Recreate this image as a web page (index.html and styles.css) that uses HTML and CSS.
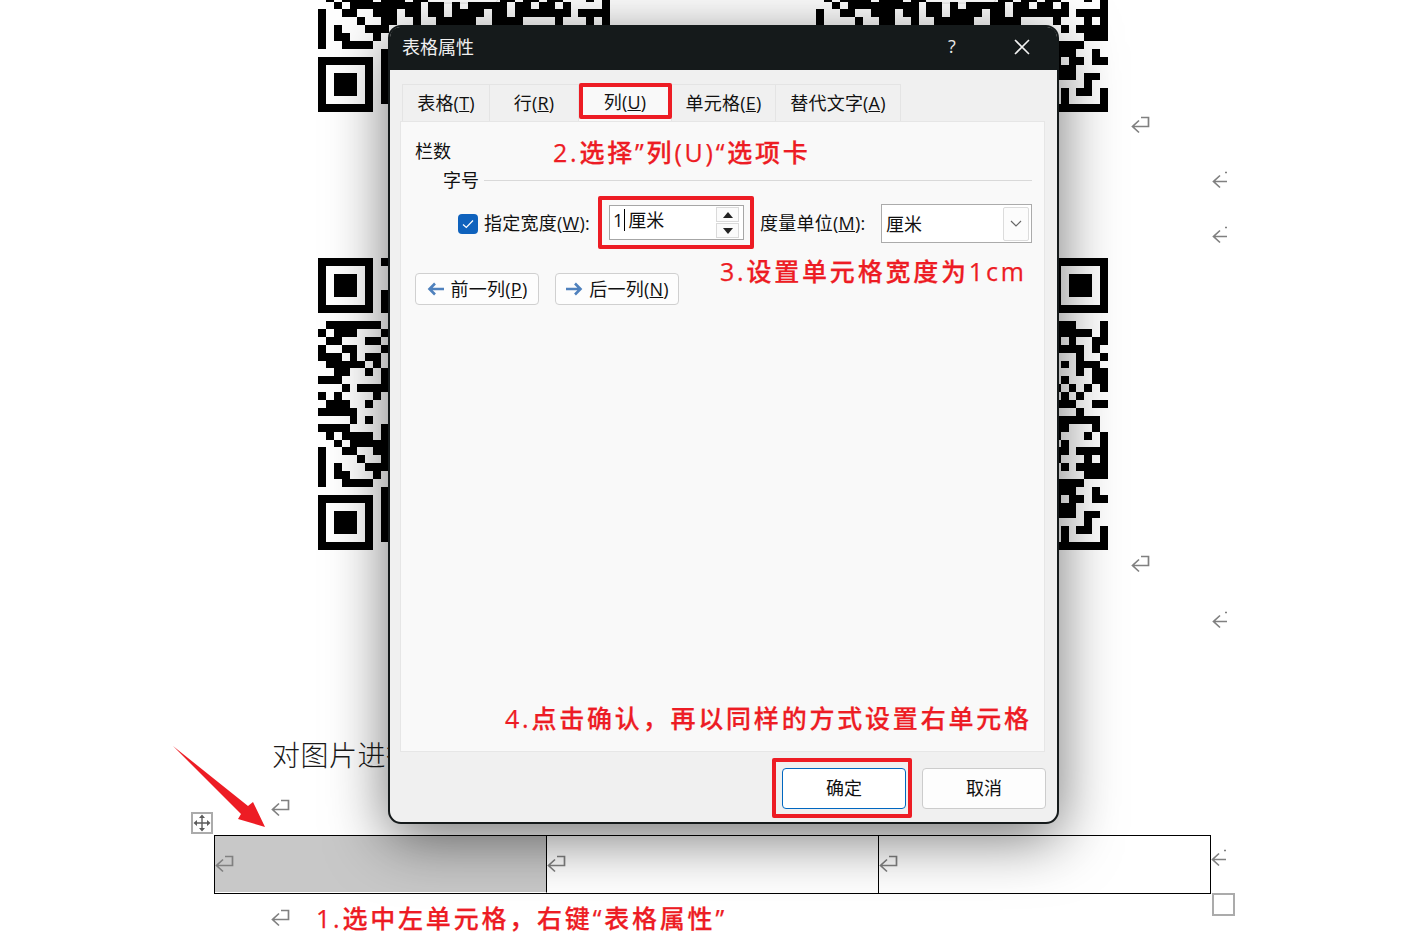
FILE: index.html
```html
<!DOCTYPE html>
<html lang="zh-CN">
<head>
    <meta charset="UTF-8">
    <meta name="viewport" content="width=device-width, initial-scale=1">
    <title>表格属性</title>
    <link rel="stylesheet" href="styles.css">
</head>
<body>

<svg class="defs" width="0" height="0" aria-hidden="true">
    <symbol id="ret" viewBox="0 0 19 18">
        <path d="M10 1.5H17.5V10.5H1.5M8 4.5L1.5 10.5L8 16.5" fill="none" stroke="#808080" stroke-width="1.7"/>
    </symbol>
    <symbol id="ret-cut" viewBox="0 0 16 18">
        <path d="M15 10.5H1.5M8 4.5L1.5 10.5L8 16.5M13 1.5H15" fill="none" stroke="#808080" stroke-width="1.7"/>
    </symbol>
    <symbol id="qr" viewBox="0 0 37 37">
        <rect x="13.8" y="14" width="9" height="9.2" rx=".6" fill="#fff" stroke="#ddd" stroke-width=".12"/>
        <path fill="#000" fill-rule="evenodd" shape-rendering="crispEdges" d="M0 0h7v7h-7zM1 1v5h5v-5zM2 2h3v3h-3z
        M0 30h7v7h-7zM1 31v5h5v-5zM2 32h3v3h-3z
        M30 0h7v7h-7zM31 1v5h5v-5zM32 2h3v3h-3z
        M8 0h1v1h-1zM8 4h1v3h-1z
        M1 8h7v1h-7zM0 9h1v1h-1zM2 9h3v1h-3zM8 9h1v1h-1z
        M1 10h2v1h-2zM6 10h2v1h-2z
        M0 11h1v1h-1zM3 11h2v1h-2zM8 11h1v1h-1z
        M0 12h3v1h-3zM4 12h1v1h-1zM6 12h2v1h-2z
        M1 13h5v1h-5zM7 13h1v1h-1z
        M2 14h2v1h-2zM6 14h1v1h-1zM8 14h1v1h-1z
        M0 15h3v1h-3zM8 15h1v1h-1z
        M3 16h1v1h-1zM5 16h4v1h-4z
        M0 17h1v1h-1zM2 17h1v1h-1zM7 17h1v1h-1z
        M1 18h3v1h-3zM6 18h1v1h-1z
        M0 19h5v1h-5z
        M4 20h1v1h-1zM6 20h1v1h-1z
        M0 21h4v1h-4zM8 21h1v1h-1z
        M1 22h1v1h-1zM3 22h4v1h-4zM8 22h1v1h-1zM9 22h2v1h-2zM12 22h2v1h-2zM23 22h2v1h-2zM26 22h2v1h-2zM29 22h2v1h-2z
        M2 23h1v1h-1zM4 23h3v1h-3zM7 23h6v1h-6zM14 23h2v1h-2zM17 23h1v1h-1zM19 23h5v1h-5zM25 23h2v1h-2zM28 23h3v1h-3z
        M0 24h1v1h-1zM3 24h2v1h-2zM7 24h3v1h-3zM11 24h2v1h-2zM14 24h2v1h-2zM17 24h4v1h-4zM22 24h2v1h-2zM25 24h5v1h-5z
        M0 25h1v1h-1zM5 25h1v1h-1zM8 25h2v1h-2zM12 25h1v1h-1zM15 25h5v1h-5zM22 25h4v1h-4zM30 25h1v1h-1z
        M0 26h1v1h-1zM2 26h1v1h-1zM6 26h3v1h-3z
        M0 27h1v1h-1zM2 27h2v1h-2zM7 27h1v1h-1z
        M0 28h1v1h-1zM3 28h4v1h-4z
        M8 29h1v7h-1z
        M30 8h3v1h-3zM36 8h1v2h-1z
        M30 9h5v1h-5z
        M30 10h1v1h-1zM32 10h1v1h-1zM35 10h2v1h-2z
        M30 11h4v1h-4zM35 11h1v1h-1z
        M33 12h1v1h-1zM36 12h1v1h-1z
        M31 13h1v1h-1zM33 13h3v1h-3z
        M33 14h1v1h-1zM35 14h2v1h-2z
        M31 15h1v1h-1zM35 15h2v1h-2z
        M30 16h1v1h-1zM32 16h1v1h-1zM34 16h1v1h-1zM36 16h1v1h-1z
        M31 17h1v1h-1zM33 17h1v1h-1z
        M30 18h3v1h-3zM35 18h2v1h-2z
        M33 19h1v1h-1z
        M30 20h6v1h-6z
        M30 21h2v1h-2zM35 21h1v1h-1z
        M34 22h1v1h-1zM36 22h1v1h-1z
        M30 23h2v1h-2zM36 23h1v1h-1z
        M30 24h2v1h-2zM33 24h4v1h-4z
        M34 25h1v1h-1zM36 25h1v1h-1z
        M31 26h1v1h-1zM33 26h4v1h-4z
        M34 27h3v1h-3z
        M30 28h4v1h-4z
        M30 29h3v1h-3zM35 29h1v1h-1z
        M30 30h1v1h-1zM32 30h2v1h-2zM35 30h2v1h-2z
        M30 31h3v1h-3z
        M30 32h3v1h-3zM34 32h2v1h-2z
        M34 33h1v1h-1z
        M31 34h1v1h-1zM33 34h2v1h-2zM36 34h1v1h-1z
        M31 35h1v1h-1zM36 35h1v1h-1z
        M30 36h7v1h-7z"/>
    </symbol>
</svg>

<main class="doc">
    <svg class="art" width="1424" height="640" viewBox="0 0 1424 640">
        <use href="#qr" x="318" y="-180" width="292" height="292"/>
        <use href="#qr" x="816" y="-180" width="292" height="292"/>
        <use href="#qr" x="318" y="258" width="292" height="292"/>
        <use href="#qr" x="816" y="258" width="292" height="292"/>
        <use href="#ret" x="1131" y="116" width="19" height="18"/>
        <use href="#ret" x="1131" y="555" width="19" height="18"/>
        <use href="#ret-cut" x="1212" y="171" width="16" height="18"/>
        <use href="#ret-cut" x="1212" y="226" width="16" height="18"/>
        <use href="#ret-cut" x="1212" y="611" width="16" height="18"/>
    </svg>

    <p class="para">对图片进行</p>

    <div class="mark-row">
        <svg width="19" height="18"><use href="#ret"/></svg>
    </div>

    <div class="table-wrap">
        <div class="move-handle">
            <svg width="18" height="18" viewBox="0 0 18 18">
                <path d="M9 2V16M2 9H16" stroke="#5c5c5c" stroke-width="1.4"/>
                <path d="M9 0.5L12 4H6zM9 17.5L12 14H6zM0.5 9L4 6V12zM17.5 9L14 6V12z" fill="#5c5c5c"/>
            </svg>
        </div>
        <div class="cell selected">
            <svg width="19" height="18"><use href="#ret"/></svg>
        </div>
        <div class="cell">
            <svg width="19" height="18"><use href="#ret"/></svg>
        </div>
        <div class="cell">
            <svg width="19" height="18"><use href="#ret"/></svg>
        </div>
        <svg class="row-end" width="16" height="18"><use href="#ret-cut"/></svg>
        <div class="resize-handle"></div>
    </div>

    <div class="caption-row">
        <svg width="19" height="18"><use href="#ret"/></svg>
        <span class="note">1.选中左单元格，右键“表格属性”</span>
    </div>

    <svg class="red-arrow" width="100" height="90" viewBox="0 0 100 90">
        <path d="M0 0L75 60L80 56L92 81L65 73L68 68z" fill="#ed1c24"/>
    </svg>
</main>

<section class="dialog">
    <header class="titlebar">
        <span class="title">表格属性</span>
        <span class="help">?</span>
        <svg class="close" width="22" height="22" viewBox="0 0 22 22">
            <path d="M4 4L18 18M18 4L4 18" stroke="#f2f2f2" stroke-width="1.6"/>
        </svg>
    </header>

    <div class="dialog-body">
        <nav class="tabs">
            <span class="tab tab-table"><span>表格(<u>T</u>)</span></span>
            <span class="tab tab-row"><span>行(<u>R</u>)</span></span>
            <span class="tab tab-col active"><span>列(<u>U</u>)</span></span>
            <span class="tab tab-cell"><span>单元格(<u>E</u>)</span></span>
            <span class="tab tab-alt"><span>替代文字(<u>A</u>)</span></span>
        </nav>

        <div class="panel">
            <div class="heading">栏数</div>
            <div class="group">
                <span>字号</span>
                <i class="rule"></i>
            </div>

            <div class="field-row">
                <span class="check">
                    <svg width="12" height="10" viewBox="0 0 12 10">
                        <path d="M1 5.5L4.3 8.5L11 1.5" fill="none" stroke="#fff" stroke-width="1.2"/>
                    </svg>
                </span>
                <label class="lbl-width">指定宽度(<u>W</u>):</label>
                <div class="spin-input">
                    <span class="spin-text">1<i class="caret"></i>厘米</span>
                    <span class="spin-btns">
                        <b><i class="tri up"></i></b>
                        <b><i class="tri down"></i></b>
                    </span>
                </div>
                <label class="lbl-unit">度量单位(<u>M</u>):</label>
                <div class="select">
                    <span class="select-text">厘米</span>
                    <span class="drop">
                        <svg width="12" height="7" viewBox="0 0 12 7">
                            <path d="M1 1L6 6L11 1" fill="none" stroke="#666" stroke-width="1.2"/>
                        </svg>
                    </span>
                </div>
            </div>

            <div class="nav-row">
                <button class="nav-btn">
                    <svg width="18" height="14" viewBox="0 0 18 14">
                        <path d="M17 7H3M8 1.5L2.5 7L8 12.5" fill="none" stroke="#4f81bd" stroke-width="2.6"/>
                    </svg>
                    <span>前一列(<u>P</u>)</span>
                </button>
                <button class="nav-btn">
                    <svg width="18" height="14" viewBox="0 0 18 14">
                        <path d="M1 7H15M10 1.5L15.5 7L10 12.5" fill="none" stroke="#4f81bd" stroke-width="2.6"/>
                    </svg>
                    <span>后一列(<u>N</u>)</span>
                </button>
            </div>
        </div>

        <footer class="dialog-foot">
            <button class="foot-btn primary">确定</button>
            <button class="foot-btn">取消</button>
        </footer>
    </div>

    <!-- red annotations lying over the dialog -->
    <span class="note note-2">2.选择”列(U)“选项卡</span>
    <span class="note note-3">3.设置单元格宽度为1cm</span>
    <span class="note note-4">4.点击确认，再以同样的方式设置右单元格</span>
    <i class="red-box box-tab"></i>
    <i class="red-box box-input"></i>
    <i class="red-box box-ok"></i>
</section>

</body>
</html>
```
FILE: styles.css
```css
* {
    box-sizing: border-box;
}

html, body {
    margin: 0;
    height: 936px;
    overflow: hidden;
    background: #fff;
}

body {
    position: relative;
    font-family: "Open Sans", "Noto Sans CJK SC", sans-serif;
    font-size: 18px;
    color: #111;
}

.defs {
    position: absolute;
}

.doc {
    display: flex;
    flex-direction: column;
    height: 936px;
}

.art {
    display: block;
    flex: none;
}

.para {
    margin: 94px 0 0 272px;
    height: 40px;
    font-family: "Noto Sans CJK SC", sans-serif;
    font-size: 28px;
    line-height: 40px;
    letter-spacing: 0.5px;
    font-weight: 300;
    color: #1a1a1a;
}

.mark-row {
    margin: 25px 0 0 271px;
    height: 18px;
}

.mark-row svg, .caption-row svg, .cell svg {
    display: block;
}

.table-wrap {
    position: relative;
    display: flex;
    width: 997px;
    height: 59px;
    margin: 18px 0 0 214px;
    border: 1.5px solid #000;
}

.cell {
    width: 332px;
    padding: 19px 0 0 0;
    border-right: 1.5px solid #000;
}

.cell:nth-child(4) {
    border-right: 0;
    flex: 1;
}

.cell.selected {
    background: #c8c8c8;
    border-bottom: 1px solid #fff;
}

.move-handle {
    position: absolute;
    left: -24.5px;
    top: -24.5px;
    width: 22px;
    height: 22px;
    display: flex;
    align-items: center;
    justify-content: center;
    background: #fff;
    border: 2px solid #ababab;
}

.row-end {
    position: absolute;
    left: 996px;
    top: 13px;
}

.resize-handle {
    position: absolute;
    left: 997px;
    top: 57px;
    width: 23px;
    height: 23px;
    border: 2px solid #ababab;
}

.caption-row {
    display: flex;
    align-items: center;
    gap: 26px;
    margin: 8px 0 0 271px;
    height: 32px;
}

.red-arrow {
    position: absolute;
    left: 173px;
    top: 746px;
}

.note {
    font-size: 25px;
    font-weight: 500;
    line-height: 32px;
    letter-spacing: 2.8px;
    color: #ed1c24;
    white-space: nowrap;
    -webkit-text-stroke: 0.25px #ed1c24;
}

/* dialog */

.dialog {
    position: absolute;
    left: 388px;
    top: 25px;
    width: 671px;
    height: 799px;
    display: flex;
    flex-direction: column;
    border: 2px solid #151a1b;
    border-radius: 13px;
    background: #f0f0f0;
    box-shadow: 0 14px 60px rgba(0, 0, 0, 0.55);
}

.titlebar {
    flex: none;
    display: flex;
    align-items: center;
    height: 43px;
    padding: 0 24px 3px 12px;
    background: #151a1b;
    border-radius: 10px 10px 0 0;
    color: #f0f0f0;
}

.title {
    flex: 1;
    margin-bottom: 3px;
}

.help {
    width: 20px;
    margin: 0 49px 3px 0;
    text-align: center;
    color: #e8e8e8;
}

.dialog-body {
    flex: 1;
    display: flex;
    flex-direction: column;
    padding: 14px 11px 0 10px;
    border-radius: 0 0 10px 10px;
}

.tabs {
    flex: none;
    display: flex;
    height: 37px;
    padding-left: 2px;
    letter-spacing: 0.2px;
}

.tab {
    display: flex;
    align-items: center;
    justify-content: center;
    padding-bottom: 2px;
    border-top: 1px solid #e4e4e4;
    border-right: 1px solid #e4e4e4;
    white-space: nowrap;
}

.tab-table { width: 88px; border-left: 1px solid #e4e4e4; }
.tab-row { width: 89px; }
.tab-col { width: 93px; }
.tab-cell { width: 104px; }
.tab-alt { width: 125px; }

.tab.active {
    background: #f9f9f9;
    padding-bottom: 4px;
}

.panel {
    flex: 1;
    margin-right: 1px;
    padding: 16px 12px 0 14px;
    background: #f9f9f9;
    border: 1px solid #e6e6e6;
}

.heading {
    height: 26px;
    line-height: 26px;
}

.group {
    display: flex;
    align-items: center;
    gap: 5px;
    height: 26px;
    margin: 3px 0 0 28px;
}

.group span {
    margin-top: -2px;
}

.rule {
    flex: 1;
    height: 1px;
    background: #d9d9d9;
}

.field-row {
    display: flex;
    align-items: center;
    height: 39px;
    margin: 11px 0 0 43px;
}

.check {
    flex: none;
    display: flex;
    align-items: center;
    justify-content: center;
    width: 20px;
    height: 20px;
    border-radius: 4px;
    background: #0f62bd;
}

.lbl-width {
    width: 106px;
    margin: -4px 0 0 6px;
    letter-spacing: 0.25px;
    white-space: nowrap;
}

.spin-input {
    flex: none;
    display: flex;
    align-items: center;
    justify-content: space-between;
    width: 135px;
    height: 35px;
    margin: -2px 0 0 19px;
    padding: 0 4px 0 3px;
    background: #fff;
    border: 1px solid #a6a6a6;
}

.spin-text {
    display: flex;
    align-items: center;
    margin-top: -6px;
    line-height: 24px;
}

.caret {
    width: 1px;
    height: 22px;
    margin: 0 3px 0 1px;
    background: #000;
}

.spin-btns {
    display: flex;
    flex-direction: column;
    gap: 1px;
    width: 23px;
}

.spin-btns b {
    display: flex;
    align-items: center;
    justify-content: center;
    height: 15px;
    background: #fbfbfb;
    border: 1px solid #dadada;
}

.tri {
    width: 0;
    height: 0;
    border-left: 5px solid transparent;
    border-right: 5px solid transparent;
}

.tri.up { border-bottom: 6px solid #222; }
.tri.down { border-top: 6px solid #222; }

.lbl-unit {
    width: 106px;
    margin: -4px 0 0 16px;
    letter-spacing: 0.25px;
    white-space: nowrap;
}

.select {
    flex: none;
    display: flex;
    align-items: center;
    justify-content: space-between;
    width: 151px;
    height: 39px;
    margin-left: 15px;
    padding: 1px 2px 1px 4px;
    background: #fff;
    border: 1px solid #ababab;
}

.select-text {
    margin-top: -2px;
}

.drop {
    display: flex;
    align-items: center;
    justify-content: center;
    width: 26px;
    height: 34px;
    background: #fcfcfc;
    border: 1px solid #dcdcdc;
    border-radius: 2px;
}

.nav-row {
    display: flex;
    gap: 16px;
    margin-top: 30px;
}

.nav-btn {
    display: flex;
    align-items: center;
    justify-content: center;
    gap: 6px;
    width: 124px;
    height: 32px;
    padding: 0;
    background: #fdfdfd;
    border: 1px solid #d0d0d0;
    border-radius: 4px;
    font: inherit;
    letter-spacing: 0.25px;
    color: inherit;
}

.nav-btn span {
    margin-top: -2px;
}

.dialog-foot {
    flex: none;
    display: flex;
    justify-content: flex-end;
    gap: 16px;
    padding-top: 16px;
    height: 70px;
}

.foot-btn {
    width: 124px;
    height: 41px;
    padding: 0 0 3px;
    background: #fdfdfd;
    border: 1px solid #cccccc;
    border-radius: 4px;
    font: inherit;
    color: inherit;
}

.foot-btn.primary {
    background: #fff;
    border: 1.5px solid #0067c0;
}

/* annotations */

.dialog .note {
    position: absolute;
}

.note-2 { left: 163px; top: 109px; }
.note-3 { left: 330px; top: 228px; }
.note-4 { left: 115px; top: 675px; }

.red-box {
    position: absolute;
    border: 4px solid #ed1c24;
    border-radius: 2px;
}

.box-tab { left: 189px; top: 56px; width: 93px; height: 36px; }
.box-input { left: 208px; top: 169px; width: 156px; height: 53px; }
.box-ok { left: 382px; top: 731px; width: 140px; height: 60px; }
```
